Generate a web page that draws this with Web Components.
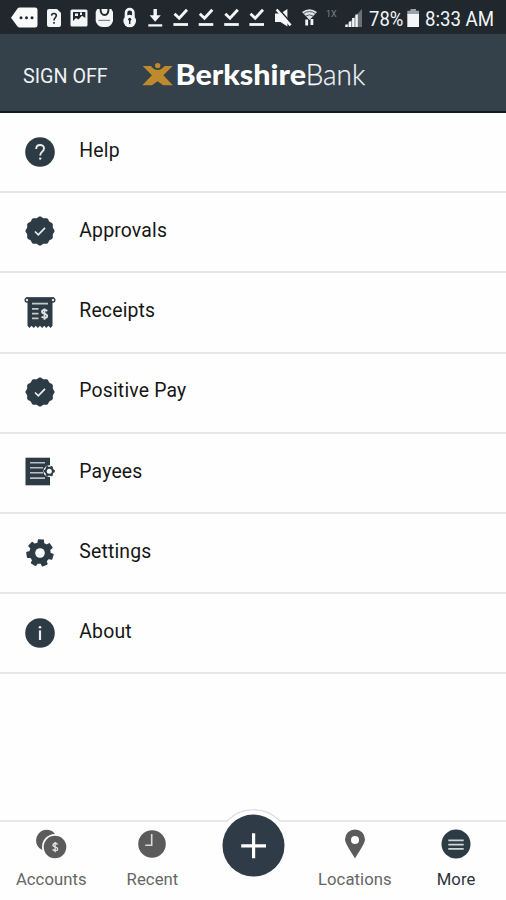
<!DOCTYPE html>
<html lang="en">
<head>
<meta charset="utf-8">
<title>Berkshire Bank</title>
<style>
html,body{margin:0;height:100%}
body{background:#fefefe;font-family:Roboto,"Liberation Sans",sans-serif;overflow:hidden}
</style>
</head>
<body>
<bank-app></bank-app>
<script>
const define = (name, html) => customElements.define(name, class extends HTMLElement {
  constructor() { super(); this.attachShadow({mode: 'open'}); }
  connectedCallback() {
    const t = document.createElement('template');
    t.innerHTML = typeof html === 'function' ? html(this) : html;
    this.shadowRoot.replaceChildren(t.content.cloneNode(true));
  }
});

const polar = (r, a) => (r * Math.cos(a)).toFixed(2) + ',' + (r * Math.sin(a)).toFixed(2);
/* Scalloped seal with twelve lobes */
const seal = () => {
  const p = [];
  for (let i = 0; i < 144; i++) { const a = i / 144 * Math.PI * 2; p.push(polar(13.9 + .6 * Math.cos(12 * a), a)); }
  return `<g transform="translate(0 -1)"><polygon points="${p.join(' ')}" fill="#2d3b45"/><path d="M-5 .5L-1.7 3.8L5-3.2" fill="none" stroke="#e9edf0" stroke-width="1.7"/></g>`;
};
const gear = (teeth, ro, ri, turn) => {
  const p = [], s = Math.PI * 2 / teeth;
  for (let i = 0; i < teeth; i++) {
    const a = i * s + turn;
    p.push(polar(ri, a - s * .29), polar(ro, a - s * .2), polar(ro, a + s * .2), polar(ri, a + s * .29));
  }
  return p.join(' ');
};

const icons = {
  help: `<circle r="14.8" fill="#2d3b45"/><path d="M-3.8-2.9C-3.8-8.4 4-8.2 4-3.5C4-.4.2-.2.2 3.4" fill="none" stroke="#e9edf0" stroke-width="1.9"/><circle cx=".2" cy="6.6" r="1.2" fill="#e9edf0"/>`,
  seal: seal(),
  receipt: `<g transform="translate(0 .7)"><path d="M-12.5-15H12.5V13L10.5 15.4L8.4 13L6.3 15.4L4.2 13L2.1 15.4L0 13L-2.1 15.4L-4.2 13L-6.3 15.4L-8.4 13L-10.5 15.4L-12.5 13Z" fill="#2d3b45"/><path d="M-14-14.5H14" stroke="#2d3b45" stroke-width="2"/><g fill="#dfe3e6" stroke="#2d3b45" stroke-width="1.3"><circle cx="-13" cy="-12.6" r="1.9"/><circle cx="13" cy="-12.6" r="1.9"/></g><path d="M-8-9H8M-8-3.8H-1.5M-8 1H-1.5M-8 5.6H-1.5" stroke="#c3c9cd" stroke-width="1.8"/><path d="M7.2-1.7C5-3.7 1.8-2.8 2-.6C2.3 1.8 7.2.7 7.2 3.3C7.2 5.6 3.4 5.8 1.6 4M4.5-4.3V7" fill="none" stroke="#dfe3e6" stroke-width="1.8"/></g>`,
  payees: `<g transform="translate(0 -1.5)"><path d="M-14.5-13.8H10V13.8H-14.5Z" fill="#2d3b45"/><path d="M-10-8.8H5M-10-3.8H3M-10 1.3H3M-10 6.6H5" stroke="#b9c0c5" stroke-width="1.6"/><circle cx="9.3" cy="-.3" r="5.9" fill="#fefefe"/><g transform="translate(9.3 -.3)"><polygon points="${gear(6, 5.6, 4.6, 0)}" fill="#2d3b45"/><circle r="2.5" fill="#fefefe"/></g></g>`,
  gear: `<polygon points="${gear(7, 13, 10, .3)}" fill="#2d3b45" stroke="#2d3b45" stroke-width="1.6" stroke-linejoin="round"/><circle r="4.8" fill="#fefefe"/>`,
  info: `<circle r="14.8" fill="#2d3b45"/><path d="M0-2.6V7" stroke="#e9edf0" stroke-width="2.2"/><circle cy="-5.8" r="1.3" fill="#e9edf0"/>`,
  accounts: `<circle cx="-4.3" cy="-3.6" r="10.6" fill="#5b5b5b"/><circle cx="4" cy="3" r="13" fill="#fefefe"/><circle cx="4" cy="3" r="11.3" fill="#5b5b5b"/><path d="M6.6.4C4.6-1.6 1.7-.6 2 1.3C2.2 3.1 6.7 2.8 6.7 5C6.7 7 3.3 7.2 1.5 5.5M4.1-2V8.3" fill="none" stroke="#e2e2e2" stroke-width="1.4"/>`,
  clock: `<circle r="13.8" fill="#5b5b5b"/><path d="M-.3-10V1.2H-6.8" fill="none" stroke="#d9d9d9" stroke-width="1.6"/>`,
  pin: `<path d="M0 14.5C-3 9-10-.6-10-4.6A10 10 0 0 1 10-4.6C10-.6 3 9 0 14.5Z" fill="#5b5b5b"/><circle cy="-4" r="4" fill="#fefefe"/>`,
  more: `<circle r="14.5" fill="#2d3b45"/><path d="M-7.7-3.6H7.7M-7.7.6H7.7M-7.7 4.8H7.7" stroke="#cfd5d9" stroke-width="1.8"/>`
};

define('ui-icon', el => `<style>:host{display:block;width:34px;height:34px}svg{display:block;width:100%;height:100%}</style>
<svg viewBox="-17 -17 34 34">${icons[el.getAttribute('name')]}</svg>`);

/* Each glyph is drawn in its own slice [left, right, markup] of the status strip */
const check = x => `<path d="M${x + 1.5} 13.8L${x + 6.2} 18.3L${x + 14} 9.8" fill="none" stroke="#f3f5f6" stroke-width="2.9"/><path d="M${x + .4} 24.5H${x + 15}" stroke="#f3f5f6" stroke-width="2.8"/>`;
const glyphs = [
  [0, 42, `<path d="M11 17.7L17.5 8.6Q18 7.5 20 7.5H35Q37.5 7.5 37.5 10V25Q37.5 27.5 35 27.5H20Q18 27.5 17.5 26.5Z" fill="#fafafa"/><g fill="#20282d"><circle cx="21" cy="17.7" r="1.5"/><circle cx="26.5" cy="17.7" r="1.5"/><circle cx="32" cy="17.7" r="1.5"/></g>`],
  [42, 66, `<path d="M49 9H57L61 13V25Q61 27 59 27H49Q47 27 47 25V11Q47 9 49 9Z" fill="#f3f5f6"/><path d="M51.6 15.6C51.7 12.8 56.3 13 56.3 15.6C56.3 17.8 54 17.8 54 20.4M54 22V23.8" fill="none" stroke="#20282d" stroke-width="1.6"/>`],
  [66, 91, `<rect x="70.5" y="9.5" width="17" height="17" rx="1.5" fill="#f3f5f6"/><path d="M73 12H85.3V18L82 15.7L78.5 19.5L76 18L73 21Z" fill="#20282d"/><path d="M75 13.5H78V16H75ZM80 12.5H82V15H80Z" fill="#f3f5f6"/>`],
  [91, 117, `<path d="M97.2 9H111.3L113 12V21Q111 27 106 27H102.5Q97 26.5 95.7 21V12Z" fill="#f3f5f6"/><path d="M100.5 9C100.5 17 108.5 17 108.5 9" fill="none" stroke="#20282d" stroke-width="1.9"/><path d="M98.5 20.4H110" stroke="#7d8589" stroke-width="1.2"/>`],
  [117, 142, `<path d="M126 17V12.8A3.7 3.7 0 0 1 133.4 12.8V17" fill="none" stroke="#f3f5f6" stroke-width="2.6"/><circle cx="129.7" cy="21" r="6.3" fill="#f3f5f6"/><circle cx="129.7" cy="19.3" r="1.5" fill="#20282d"/><path d="M129.7 19V24" stroke="#20282d" stroke-width="1.4"/>`],
  [142, 168, `<path d="M155.2 9V19" stroke="#f3f5f6" stroke-width="3.4"/><path d="M149.6 15.3H160.8L155.2 21.8Z" fill="#f3f5f6"/><path d="M148.3 25.4H162.2" stroke="#f3f5f6" stroke-width="2.3"/>`],
  [168, 193, check(173)], [193, 218, check(198.3)], [218, 244, check(223.8)], [244, 269, check(249)],
  [269, 296, `<path d="M275 13.5H280.5L287.4 9V26.5L280.5 22H275Z" fill="#f3f5f6"/><path d="M278.6 8.8L292.8 25" stroke="#20282d" stroke-width="1.7"/><path d="M276.6 9.5L290.6 25.3" stroke="#f3f5f6" stroke-width="2.6"/>`],
  [296, 321, `<path d="M302 12Q309.5 6.5 317 12L309.5 20Z" fill="#dfe3e5"/><path d="M303.5 13.6Q309.5 9.5 315.5 13.6M305.5 16.2Q309.5 13.3 313.5 16.2" fill="none" stroke="#434c52" stroke-width=".9"/><path d="M306.7 19.5V25.5M311.9 19V25" stroke="#f3f5f6" stroke-width="2.8"/>`],
  [321, 341, `<text x="326" y="16.5" font-size="9" fill="#7b8388">1X</text>`],
  [341, 364, `<path d="M345 27L362 9V27Z" fill="#68727a"/><path d="M346.5 24.5V27M350 21.5V27M353.3 18V27M356.6 14.5V27" stroke="#f3f5f6" stroke-width="2.4"/>`],
  [364, 407, `<text x="369" y="26.1" font-size="19.5" textLength="34.3" lengthAdjust="spacingAndGlyphs" fill="#f3f5f6">78%</text>`],
  [407, 421, `<path d="M410.5 9H416V10.8H419V15H407.3V10.8H410.5Z" fill="#9ba2a6"/><path d="M407.3 14H419V27H407.3Z" fill="#f3f5f6"/>`],
  [421, 506, `<text x="425" y="26.1" font-size="20.5" textLength="69" lengthAdjust="spacingAndGlyphs" fill="#f3f5f6">8:33 AM</text>`]
];
define('status-bar', `<style>:host{display:flex;height:34px;background:#20282e}svg{display:block;flex:none;overflow:visible}</style>` +
  glyphs.map(([a, b, m]) => `<svg width="${b - a}" height="34" viewBox="${a} 0 ${b - a} 34">${m}</svg>`).join(''));

define('brand-logo', `<style>:host{display:block}svg{display:block}</style>
<svg width="226" height="40" viewBox="142 55 226 40" font-family="Lato,sans-serif">
<g fill="#bd8a2d"><circle cx="157.7" cy="65.6" r="2.7"/><path d="M142.7 66H151Q153.8 70 157.6 70T164.5 66H172.7L163.4 75.3L172.8 85.2H163.2L157.6 81.2L152 85.2H142.3L151.9 75.3Z"/></g>
<text x="175.4" y="84.6" font-size="29" font-weight="900" textLength="130.6" lengthAdjust="spacingAndGlyphs" fill="#fff">Berkshire</text>
<text x="305.7" y="84.6" font-size="29" font-weight="300" textLength="59.6" lengthAdjust="spacingAndGlyphs" fill="#f3f6f8" stroke="#f3f6f8" stroke-width=".25">Bank</text>
</svg>`);

define('app-header', `<style>
:host{display:flex;box-sizing:border-box;height:79px;padding-left:23px;background:#34404a;border-bottom:2px solid #111a24;color:#eef2f5;align-items:center}
.off{width:119px;font-size:19.7px;line-height:24px;padding-top:9px;white-space:nowrap}
brand-logo{margin-top:5px}
</style><div class="off"><slot></slot></div><brand-logo></brand-logo>`);

define('menu-row', el => `<style>
:host{display:flex;box-sizing:border-box;height:80.2px;border-bottom:2px solid #e6e6e6;padding-left:23px;align-items:center;color:#161616;font-size:19.4px}
span{margin-left:22.3px;padding-bottom:2.6px;line-height:24px;letter-spacing:.17px}
</style><ui-icon name="${el.getAttribute('icon')}"></ui-icon><span><slot></slot></span>`);

define('tab-item', el => `<style>
:host{display:flex;flex-direction:column;align-items:center;width:101.2px;padding-top:5px;color:#666;font-size:16.7px;line-height:20px}
:host([active]){color:#2e353a}
span{margin-top:9px;letter-spacing:.05px}
</style><ui-icon name="${el.getAttribute('icon')}"></ui-icon><span><slot></slot></span>`);

define('add-button', `<style>:host{display:block;width:101.2px;height:80px}svg{display:block;overflow:visible}</style>
<svg width="101.2" height="80" viewBox="203 820 101.2 80"><clipPath id="above"><path d="M203 800H304V822H203Z"/></clipPath>
<circle cx="253.5" cy="845.6" r="36" fill="#fefefe" stroke="#dedede" stroke-width="1.3" clip-path="url(#above)"/>
<circle cx="253.5" cy="845.6" r="31" fill="#2f3c47"/><path d="M241.2 845.8H266M253.6 833.3V858.3" stroke="#fff" stroke-width="3.2"/></svg>`);

define('tab-bar', `<style>:host{display:flex;box-sizing:border-box;height:80px;border-top:2px solid #e8e8e8;background:#fefefe;padding-left:.7px}
tab-item,add-button{flex:none}
add-button{margin-top:-2px}</style>
<tab-item icon="accounts">Accounts</tab-item><tab-item icon="clock">Recent</tab-item><add-button></add-button><tab-item icon="pin">Locations</tab-item><tab-item icon="more" active>More</tab-item>`);

define('bank-app', `<style>:host{display:flex;flex-direction:column;width:506px;height:900px}main{flex:1}</style>
<status-bar></status-bar><app-header>SIGN OFF</app-header>
<main><menu-row icon="help">Help</menu-row><menu-row icon="seal">Approvals</menu-row><menu-row icon="receipt">Receipts</menu-row><menu-row icon="seal">Positive Pay</menu-row><menu-row icon="payees">Payees</menu-row><menu-row icon="gear">Settings</menu-row><menu-row icon="info">About</menu-row></main>
<tab-bar></tab-bar>`);
</script>
</body>
</html>
